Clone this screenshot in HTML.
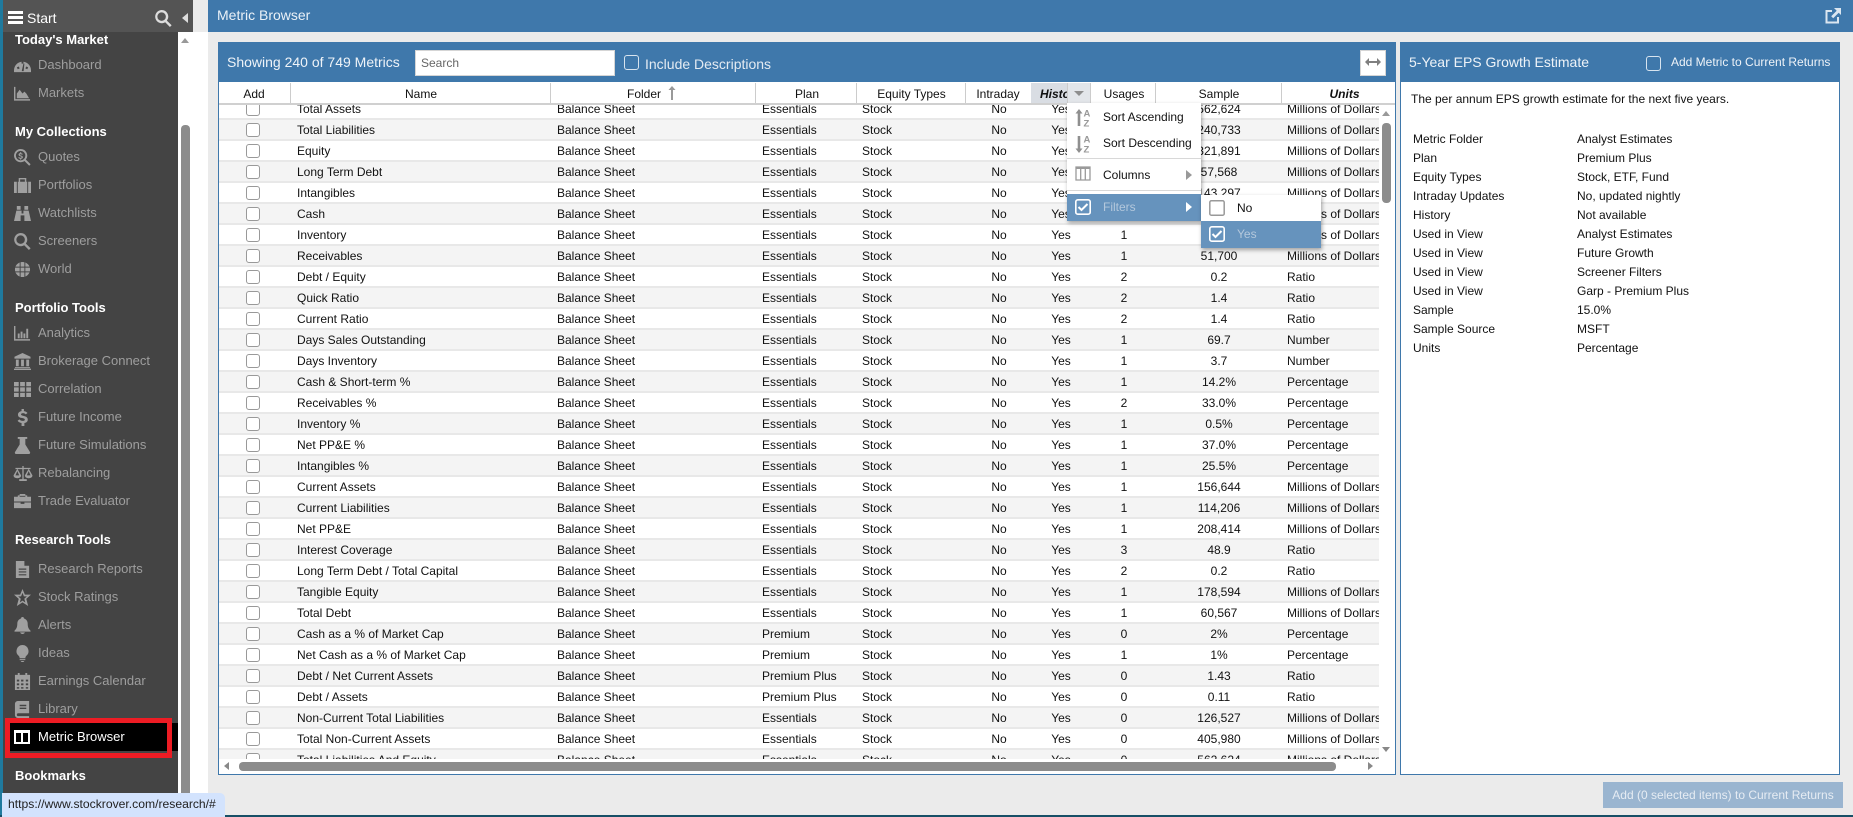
<!DOCTYPE html>
<html><head><meta charset="utf-8"><title>Metric Browser</title>
<style>
*{box-sizing:border-box}
html,body{margin:0;padding:0;width:1853px;height:817px;overflow:hidden;background:#ebebeb;font-family:"Liberation Sans",Arial,sans-serif;font-size:12px;color:#111}
.a{position:absolute}
#strip{left:0;top:0;width:3px;height:817px;background:#1f7a9e}
#side{left:3px;top:0;width:175px;height:815px;background:#444}
#sb{left:178px;top:32px;width:30px;height:783px;background:#fff}
#thumb{left:181px;top:125px;width:9px;height:690px;background:#8c8c8c;border-radius:4px 4px 0 0}
#head{left:3px;top:0;width:190px;height:32px;background:#545454}
#head span{position:absolute;left:24px;top:10px;font-size:14px;line-height:16px;color:#fff}
.t{position:absolute;left:15px;font-size:13px;font-weight:bold;color:#fff;line-height:16px;white-space:nowrap;margin-top:1px}
.it{position:absolute;left:38px;font-size:13px;color:#9e9e9e;line-height:16px;white-space:nowrap;margin-top:1px}
.ic{position:absolute;left:14px;width:17px;height:17px;fill:#a0a0a0;transform:translateY(1px)}
#top{left:208px;top:0;width:1645px;height:32px;background:#3f78ab;color:#eaf1f7;font-size:14px}
#top span{position:absolute;left:9px;top:7px;line-height:16px}
#lp{left:218px;top:42px;width:1178px;height:733px;border:1px solid #3f78ab;background:#fff;overflow:hidden}
#tb{left:218px;top:42px;width:1178px;height:40px;background:#3f78ab;color:#eef3f8;font-size:14px}
#srch{left:415px;top:50px;width:200px;height:26px;background:#fff;border:1px solid #d5d5d5;color:#666;padding:5px 5px;line-height:14px}
.cbw{width:15px;height:15px;border:1.5px solid #d7e4ef;border-radius:3px;background:#3f78ab}
#hd{left:219px;top:83px;width:1176px;height:22px;background:#fff;border-bottom:2px solid #d0d0d0}
.h{position:absolute;top:86px;height:17px;line-height:17px;text-align:center;color:#111;white-space:nowrap;overflow:hidden}
.sep{position:absolute;top:83px;width:1px;height:20px;background:#ccc}
#rows{left:219px;top:105px;width:1160px;height:654px;overflow:hidden}
#rin{position:absolute;left:0;top:-6px;width:1160px}
.r{position:relative;height:21px;border-bottom:2px solid #e8e8e8;background:#fff;line-height:19px}
.r:nth-child(even){background:#f4f4f4}
.r i{position:absolute;left:27px;top:3px;width:14px;height:14px;border:1.5px solid #999;border-radius:3px;background:#fff}
.r span{position:absolute;top:1px;white-space:nowrap}
.r span:nth-of-type(1){left:78px}
.r span:nth-of-type(2){left:338px}
.r span:nth-of-type(3){left:543px}
.r span:nth-of-type(4){left:643px}
.r span:nth-of-type(5){left:747px;width:66px;text-align:center}
.r span:nth-of-type(6){left:812px;width:60px;text-align:center}
.r span:nth-of-type(7){left:873px;width:64px;text-align:center}
.r span:nth-of-type(8){left:937px;width:126px;text-align:center}
.r span:nth-of-type(9){left:1068px;width:92px;overflow:hidden}
#menu{left:1067px;top:103px;width:134px;height:118px;background:#fff;box-shadow:1px 2px 4px rgba(0,0,0,.35)}
#sub{left:1201px;top:195px;width:120px;height:53px;background:#fff;box-shadow:1px 2px 4px rgba(0,0,0,.35)}
.mt{position:absolute;line-height:16px;white-space:nowrap;color:#111}
#rp{left:1400px;top:42px;width:440px;height:733px;border:1px solid #3f78ab;background:#fff}
#rh{left:1400px;top:42px;width:440px;height:40px;background:#3f78ab;color:#eef3f8}
.k,.v{position:absolute;line-height:16px;white-space:nowrap;color:#111}
.k{left:1413px}.v{left:1577px}
#btn{left:1603px;top:782px;width:240px;height:26px;background:#9ab5d0;color:#e6ecf3;text-align:center;line-height:26px;font-size:12px}
#bot{left:0;top:815px;width:1853px;height:2px;background:#174f66}
#tip{left:2px;top:793px;width:223px;height:24px;background:#d3e3fd;border-radius:0 5px 0 0;font-size:12.15px;color:#222;line-height:22px;padding-left:6px;white-space:nowrap;overflow:hidden}
</style></head><body>
<div class="a" id="strip"></div>
<div class="a" id="side">
<div class="t" style="top:31px;left:12px">Today's Market</div>
<div class="it" style="top:56px;left:35px">Dashboard</div>
<div class="it" style="top:84px;left:35px">Markets</div>
<div class="t" style="top:123px;left:12px">My Collections</div>
<div class="it" style="top:148px;left:35px">Quotes</div>
<div class="it" style="top:176px;left:35px">Portfolios</div>
<div class="it" style="top:204px;left:35px">Watchlists</div>
<div class="it" style="top:232px;left:35px">Screeners</div>
<div class="it" style="top:260px;left:35px">World</div>
<div class="t" style="top:299px;left:12px">Portfolio Tools</div>
<div class="it" style="top:324px;left:35px">Analytics</div>
<div class="it" style="top:352px;left:35px">Brokerage Connect</div>
<div class="it" style="top:380px;left:35px">Correlation</div>
<div class="it" style="top:408px;left:35px">Future Income</div>
<div class="it" style="top:436px;left:35px">Future Simulations</div>
<div class="it" style="top:464px;left:35px">Rebalancing</div>
<div class="it" style="top:492px;left:35px">Trade Evaluator</div>
<div class="t" style="top:531px;left:12px">Research Tools</div>
<div class="it" style="top:560px;left:35px">Research Reports</div>
<div class="it" style="top:588px;left:35px">Stock Ratings</div>
<div class="it" style="top:616px;left:35px">Alerts</div>
<div class="it" style="top:644px;left:35px">Ideas</div>
<div class="it" style="top:672px;left:35px">Earnings Calendar</div>
<div class="it" style="top:700px;left:35px">Library</div>
<div class="a" style="left:7px;top:723px;width:168px;height:28px;background:#000"></div>
<div class="a" style="left:2px;top:718px;width:167px;height:40px;border:5px solid #ed1c24"></div>
<div class="it" style="top:728px;left:35px;color:#fff">Metric Browser</div>
<div class="t" style="top:767px;left:12px">Bookmarks</div>
</div>
<!-- sidebar icons -->
<svg class="a ic" style="top:56px" viewBox="0 0 18 18"><path fill-rule="evenodd" d="M0 14a9 9 0 1 1 18 0v2H0zM3 11l1 2 2-1-1-2zM8 5v2h2V5zM13 10l-1 2 2 1 1-2zM8.200 15h2L11 7 10 7z"/></svg>
<svg class="a ic" style="top:84px" viewBox="0 0 18 18"><path d="M0 2h1.500v13H17v1.500H0z"/><path d="M3 14V9l3-4 3 4 2-2 2 2 3 5z"/></svg>
<svg class="a ic" style="top:148px" viewBox="0 0 18 18"><path fill-rule="evenodd" d="M7 0a7 7 0 0 1 5.600 11.200l5 5-1.500 1.500-5-5A7 7 0 1 1 7 0zm0 2a5 5 0 1 0 0 10A5 5 0 0 0 7 2z"/><path d="M6.400 3.500h1.200v1c1 .1 1.500.5 1.800 1l-1 .6c-.3-.4-.7-.6-1.200-.6s-1 .2-1 .6 .4.500 1.200.8c1.200.3 2 .7 2 1.800 0 .9-.7 1.500-1.800 1.600v1H6.400v-1c-1-.1-1.700-.6-2-1.200l1-.6c.3.500.9.800 1.500.8.700 0 1.100-.2 1.100-.7 0-.4-.4-.6-1.300-.8-1.100-.3-1.900-.7-1.900-1.800 0-.9.700-1.500 1.600-1.600z"/></svg>
<svg class="a ic" style="top:176px" viewBox="0 0 18 18"><path fill-rule="evenodd" d="M0 5h3v12H0zM15 5h3v12h-3zM4 5h1V1h8v4h1v12H4zM6.500 2.500V5h5V2.500z"/></svg>
<svg class="a ic" style="top:204px" viewBox="0 0 18 18"><path d="M3 1h4v4H3zM11 1h4v4h-4zM2.500 6H8v3h2V6h5.500L18 17h-7v-6H7v6H0z"/></svg>
<svg class="a ic" style="top:232px" viewBox="0 0 18 18"><path fill-rule="evenodd" d="M7 0a7 7 0 0 1 5.600 11.200l5 5-1.800 1.800-5-5A7 7 0 1 1 7 0zm0 2.500a4.500 4.500 0 1 0 0 9 4.500 4.500 0 0 0 0-9z"/></svg>
<svg class="a ic" style="top:260px" viewBox="0 0 18 18"><path d="M9 1a8 8 0 1 0 0 16A8 8 0 0 0 9 1z"/><path fill="#444" d="M1 6h16v1H1zM1 11h16v1H1zM6 1h1v16H6zM11 1h1v16h-1z"/></svg>
<svg class="a ic" style="top:324px" viewBox="0 0 18 18"><path d="M0 1h1.500v14H17v1.500H0zM4 9h2v5H4zM7 7h2v7H7zM10 9h2v5h-2zM13 4h2v10h-2z"/></svg>
<svg class="a ic" style="top:352px" viewBox="0 0 18 18"><path d="M9 0l8.500 4v2H.5V4zM2 7h3v7H2zM7.500 7h3v7h-3zM13 7h3v7h-3zM1 15h16v1H1zM0 16.500h18V18H0z"/></svg>
<svg class="a ic" style="top:380px" viewBox="0 0 18 18"><path d="M0 1h5v4.500H0zM6.500 1h5v4.500h-5zM13 1h5v4.500h-5zM0 6.800h5v4.500H0zM6.500 6.800h5v4.500h-5zM13 6.800h5v4.500h-5zM0 12.600h5V17H0zM6.500 12.600h5V17h-5zM13 12.600h5V17h-5z"/></svg>
<svg class="a ic" style="top:408px" viewBox="0 0 18 18"><path d="M8 0h2.500v2.200c1.600.2 3 1 3.800 2.100l-1.900 1.400c-.6-.8-1.600-1.300-2.800-1.300-1.300 0-2.200.5-2.200 1.300 0 .9 1 1.200 2.700 1.600 2.300.5 4.500 1.400 4.500 3.900 0 2-1.500 3.300-3.600 3.600V18H8v-3.200c-1.800-.2-3.300-1.100-4.200-2.400l2-1.400c.7 1 1.900 1.600 3.300 1.600 1.400 0 2.400-.5 2.400-1.400 0-1-1.100-1.300-2.900-1.700C6.300 9.400 4.200 8.600 4.200 6c0-1.900 1.500-3.300 3.800-3.700z"/></svg>
<svg class="a ic" style="top:436px" viewBox="0 0 18 18"><path d="M4 0h10v2h-2v6l5 8c.4 1-.2 2-1.200 2H2.200C1.200 18 .6 17 1 16l5-8V2H4z"/></svg>
<svg class="a ic" style="top:464px;left:13px;width:20px" viewBox="0 0 20 18"><path d="M9.300 1h1.400v14H14v2H6v-2h3.300zM2 3h16v1.400H2z"/><path d="M4 4L0 11c0 2 1.800 3 4 3s4-1 4-3zM4 6.500L6 11H2zM16 4l-4 7c0 2 1.800 3 4 3s4-1 4-3zM16 6.500l2 4.500h-4z" fill-rule="evenodd"/></svg>
<svg class="a ic" style="top:492px" viewBox="0 0 18 18"><path d="M6 1h6v1.500h2V4h4v5H0V4h4V2.500h2zM6 3v1h6V3zM0 10h7v1.500h4V10h7v6H0z"/></svg>
<svg class="a ic" style="top:560px" viewBox="0 0 18 18"><path fill-rule="evenodd" d="M2 0h9l5 5v13H2zM11 0v5h5zM5 8v1.200h8V8zM5 11v1.200h8V11zM5 14v1.200h8V14z"/></svg>
<svg class="a ic" style="top:588px" viewBox="0 0 18 18"><path fill-rule="evenodd" d="M9 0l2.500 6H18l-5 4.500L15 18l-6-3.800L3 18l2-7.500L0 6h6.500zM9 4L7.500 7.800H4.400l2.800 2.500-1 4 2.800-2 3 2-1.100-4 2.800-2.500h-3.200z"/></svg>
<svg class="a ic" style="top:616px" viewBox="0 0 18 18"><path d="M9 0a1.500 1.500 0 0 1 1.500 1.600C13 2.300 14.500 4.500 14.500 7c0 4 1 5.500 3 7.500v1H.5v-1c2-2 3-3.500 3-7.500 0-2.500 1.500-4.700 4-5.400A1.500 1.500 0 0 1 9 0zM6.500 16.300h5C11.300 17.300 10.300 18 9 18s-2.300-.7-2.500-1.700z"/></svg>
<svg class="a ic" style="top:644px" viewBox="0 0 18 18"><path d="M9 0a6.500 6.500 0 0 1 4 11.500c-.7.700-1 1.500-1 2.500H6c0-1-.3-1.800-1-2.500A6.500 6.500 0 0 1 9 0zM6 15h6v1H6zM7 17h4l-1 1H8z"/></svg>
<svg class="a ic" style="top:672px" viewBox="0 0 18 18"><path fill-rule="evenodd" d="M4 0h2v2h6V0h2v2h3v16H1V2h3zM3 7v2h2.500V7zM7.500 7v2H10V7zM12.500 7v2H15V7zM3 11v2h2.500v-2zM7.500 11v2H10v-2zM12.500 11v2H15v-2zM3 15v1.500h2.500V15zM7.500 15v1.500H10V15zM12.500 15v1.500H15V15z"/></svg>
<svg class="a ic" style="top:700px" viewBox="0 0 18 18"><path fill-rule="evenodd" d="M4 0h12v13H4.500a1.500 1.500 0 0 0 0 3H16v2H4a3 3 0 0 1-3-3V3a3 3 0 0 1 3-3zM6 4v1.500h7V4zM6 7v1.500h7V7z"/></svg>
<svg class="a" style="left:14px;top:730px;width:16px;height:14px" viewBox="0 0 16 14"><path fill="#fff" fill-rule="evenodd" d="M0 0h16v14H0zM2 3v9h5V3zM9 3v9h5V3z"/></svg>
<div class="a" id="sb"></div><div class="a" id="thumb"></div>
<div class="a" style="left:181px;top:38px;width:0;height:0;border-left:4.500px solid transparent;border-right:4.500px solid transparent;border-bottom:5px solid #999"></div>
<div class="a" id="head"><span>Start</span>
<div class="a" style="left:5px;top:11px;width:15px;height:3px;background:#fff"></div>
<div class="a" style="left:5px;top:16px;width:15px;height:3px;background:#fff"></div>
<div class="a" style="left:5px;top:21px;width:15px;height:3px;background:#fff"></div>
<svg class="a" style="left:152px;top:10px;width:17px;height:17px" viewBox="0 0 18 18"><path fill="#ddd" fill-rule="evenodd" d="M7 0a7 7 0 0 1 5.600 11.200l5 5-1.800 1.800-5-5A7 7 0 1 1 7 0zm0 2.500a4.500 4.500 0 1 0 0 9 4.500 4.500 0 0 0 0-9z"/></svg>
<div class="a" style="left:179px;top:13px;width:0;height:0;border-top:5px solid transparent;border-bottom:5px solid transparent;border-right:6px solid #ddd"></div>
</div>
<div class="a" id="top"><span>Metric Browser</span>
<svg class="a" style="left:1617px;top:8px;width:16px;height:16px" viewBox="0 0 16 16"><path fill="none" stroke="#dbe6f0" stroke-width="2" d="M7 3H1.500v11.500H13V9"/><path fill="#dbe6f0" d="M9 0h7v7l-2.300-2.300-5.500 5.500-2-2 5.500-5.500z"/></svg>
</div>
<div class="a" id="lp"></div>
<div class="a" id="tb"></div>
<div class="a" style="left:227px;top:54px;color:#eef3f8;font-size:14px;line-height:16px">Showing 240 of 749 Metrics</div>
<div class="a" id="srch">Search</div>
<div class="a cbw" style="left:624px;top:55px"></div>
<div class="a" style="left:645px;top:56px;color:#e4ebf2;font-size:14px;line-height:16px">Include Descriptions</div>
<div class="a" style="left:1360px;top:50px;width:26px;height:26px;background:#fff;border:1px solid #d5d5d5"></div>
<svg class="a" style="left:1365px;top:57px;width:16px;height:10px" viewBox="0 0 16 10"><path fill="#7f7f7f" d="M0 5l4-4v3h8V1l4 4-4 4V6H4v3z"/></svg>
<div class="a" id="hd"></div>
<div class="sep" style="left:290px"></div><div class="sep" style="left:550px"></div><div class="sep" style="left:755px"></div><div class="sep" style="left:856px"></div><div class="sep" style="left:965px"></div><div class="sep" style="left:1031px"></div><div class="sep" style="left:1155px"></div><div class="sep" style="left:1281px"></div>
<div class="h" style="left:218px;width:72px">Add</div>
<div class="h" style="left:291px;width:260px">Name</div>
<div class="a" style="left:627px;top:86px;line-height:17px">Folder</div>
<svg class="a" style="left:668px;top:86px;width:8px;height:14px" viewBox="0 0 8 14"><path fill="#999" d="M4 0l3.500 4H5v10H3V4H.5z"/></svg>
<div class="h" style="left:757px;width:100px">Plan</div>
<div class="h" style="left:857px;width:109px">Equity Types</div>
<div class="h" style="left:965px;width:66px">Intraday</div>
<div class="h" style="left:1092px;width:64px">Usages</div>
<div class="h" style="left:1156px;width:126px">Sample</div>
<div class="a" style="left:1282px;top:86px;line-height:17px;width:114px;font-weight:bold;font-style:italic;text-align:center;padding-left:11px">Units</div>
<div class="a" style="left:1031px;top:83px;width:60px;height:20px;background:#d9dde3"></div>
<div class="a" style="left:1040px;top:86px;width:27px;overflow:hidden;line-height:17px;font-weight:bold;font-style:italic;white-space:nowrap">History</div>
<div class="a" style="left:1067px;top:83px;width:24px;height:20px;background:#e3e6ea;border-left:1px solid #ccc;border-right:1px solid #ccc"></div>
<div class="a" style="left:1074px;top:91px;width:0;height:0;border-left:5px solid transparent;border-right:5px solid transparent;border-top:5px solid #8e8e8e"></div>
<div class="a" id="rows"><div id="rin">
<div class="r"><i></i><span>Total Assets</span><span>Balance Sheet</span><span>Essentials</span><span>Stock</span><span>No</span><span>Yes</span><span>1</span><span>562,624</span><span>Millions of Dollars</span></div>
<div class="r"><i></i><span>Total Liabilities</span><span>Balance Sheet</span><span>Essentials</span><span>Stock</span><span>No</span><span>Yes</span><span>1</span><span>240,733</span><span>Millions of Dollars</span></div>
<div class="r"><i></i><span>Equity</span><span>Balance Sheet</span><span>Essentials</span><span>Stock</span><span>No</span><span>Yes</span><span>1</span><span>321,891</span><span>Millions of Dollars</span></div>
<div class="r"><i></i><span>Long Term Debt</span><span>Balance Sheet</span><span>Essentials</span><span>Stock</span><span>No</span><span>Yes</span><span>1</span><span>57,568</span><span>Millions of Dollars</span></div>
<div class="r"><i></i><span>Intangibles</span><span>Balance Sheet</span><span>Essentials</span><span>Stock</span><span>No</span><span>Yes</span><span>1</span><span>143,297</span><span>Millions of Dollars</span></div>
<div class="r"><i></i><span>Cash</span><span>Balance Sheet</span><span>Essentials</span><span>Stock</span><span>No</span><span>Yes</span><span>1</span><span>104,757</span><span>Millions of Dollars</span></div>
<div class="r"><i></i><span>Inventory</span><span>Balance Sheet</span><span>Essentials</span><span>Stock</span><span>No</span><span>Yes</span><span>1</span><span>2,636</span><span>Millions of Dollars</span></div>
<div class="r"><i></i><span>Receivables</span><span>Balance Sheet</span><span>Essentials</span><span>Stock</span><span>No</span><span>Yes</span><span>1</span><span>51,700</span><span>Millions of Dollars</span></div>
<div class="r"><i></i><span>Debt / Equity</span><span>Balance Sheet</span><span>Essentials</span><span>Stock</span><span>No</span><span>Yes</span><span>2</span><span>0.2</span><span>Ratio</span></div>
<div class="r"><i></i><span>Quick Ratio</span><span>Balance Sheet</span><span>Essentials</span><span>Stock</span><span>No</span><span>Yes</span><span>2</span><span>1.4</span><span>Ratio</span></div>
<div class="r"><i></i><span>Current Ratio</span><span>Balance Sheet</span><span>Essentials</span><span>Stock</span><span>No</span><span>Yes</span><span>2</span><span>1.4</span><span>Ratio</span></div>
<div class="r"><i></i><span>Days Sales Outstanding</span><span>Balance Sheet</span><span>Essentials</span><span>Stock</span><span>No</span><span>Yes</span><span>1</span><span>69.7</span><span>Number</span></div>
<div class="r"><i></i><span>Days Inventory</span><span>Balance Sheet</span><span>Essentials</span><span>Stock</span><span>No</span><span>Yes</span><span>1</span><span>3.7</span><span>Number</span></div>
<div class="r"><i></i><span>Cash &amp; Short-term %</span><span>Balance Sheet</span><span>Essentials</span><span>Stock</span><span>No</span><span>Yes</span><span>1</span><span>14.2%</span><span>Percentage</span></div>
<div class="r"><i></i><span>Receivables %</span><span>Balance Sheet</span><span>Essentials</span><span>Stock</span><span>No</span><span>Yes</span><span>2</span><span>33.0%</span><span>Percentage</span></div>
<div class="r"><i></i><span>Inventory %</span><span>Balance Sheet</span><span>Essentials</span><span>Stock</span><span>No</span><span>Yes</span><span>1</span><span>0.5%</span><span>Percentage</span></div>
<div class="r"><i></i><span>Net PP&amp;E %</span><span>Balance Sheet</span><span>Essentials</span><span>Stock</span><span>No</span><span>Yes</span><span>1</span><span>37.0%</span><span>Percentage</span></div>
<div class="r"><i></i><span>Intangibles %</span><span>Balance Sheet</span><span>Essentials</span><span>Stock</span><span>No</span><span>Yes</span><span>1</span><span>25.5%</span><span>Percentage</span></div>
<div class="r"><i></i><span>Current Assets</span><span>Balance Sheet</span><span>Essentials</span><span>Stock</span><span>No</span><span>Yes</span><span>1</span><span>156,644</span><span>Millions of Dollars</span></div>
<div class="r"><i></i><span>Current Liabilities</span><span>Balance Sheet</span><span>Essentials</span><span>Stock</span><span>No</span><span>Yes</span><span>1</span><span>114,206</span><span>Millions of Dollars</span></div>
<div class="r"><i></i><span>Net PP&amp;E</span><span>Balance Sheet</span><span>Essentials</span><span>Stock</span><span>No</span><span>Yes</span><span>1</span><span>208,414</span><span>Millions of Dollars</span></div>
<div class="r"><i></i><span>Interest Coverage</span><span>Balance Sheet</span><span>Essentials</span><span>Stock</span><span>No</span><span>Yes</span><span>3</span><span>48.9</span><span>Ratio</span></div>
<div class="r"><i></i><span>Long Term Debt / Total Capital</span><span>Balance Sheet</span><span>Essentials</span><span>Stock</span><span>No</span><span>Yes</span><span>2</span><span>0.2</span><span>Ratio</span></div>
<div class="r"><i></i><span>Tangible Equity</span><span>Balance Sheet</span><span>Essentials</span><span>Stock</span><span>No</span><span>Yes</span><span>1</span><span>178,594</span><span>Millions of Dollars</span></div>
<div class="r"><i></i><span>Total Debt</span><span>Balance Sheet</span><span>Essentials</span><span>Stock</span><span>No</span><span>Yes</span><span>1</span><span>60,567</span><span>Millions of Dollars</span></div>
<div class="r"><i></i><span>Cash as a % of Market Cap</span><span>Balance Sheet</span><span>Premium</span><span>Stock</span><span>No</span><span>Yes</span><span>0</span><span>2%</span><span>Percentage</span></div>
<div class="r"><i></i><span>Net Cash as a % of Market Cap</span><span>Balance Sheet</span><span>Premium</span><span>Stock</span><span>No</span><span>Yes</span><span>1</span><span>1%</span><span>Percentage</span></div>
<div class="r"><i></i><span>Debt / Net Current Assets</span><span>Balance Sheet</span><span>Premium Plus</span><span>Stock</span><span>No</span><span>Yes</span><span>0</span><span>1.43</span><span>Ratio</span></div>
<div class="r"><i></i><span>Debt / Assets</span><span>Balance Sheet</span><span>Premium Plus</span><span>Stock</span><span>No</span><span>Yes</span><span>0</span><span>0.11</span><span>Ratio</span></div>
<div class="r"><i></i><span>Non-Current Total Liabilities</span><span>Balance Sheet</span><span>Essentials</span><span>Stock</span><span>No</span><span>Yes</span><span>0</span><span>126,527</span><span>Millions of Dollars</span></div>
<div class="r"><i></i><span>Total Non-Current Assets</span><span>Balance Sheet</span><span>Essentials</span><span>Stock</span><span>No</span><span>Yes</span><span>0</span><span>405,980</span><span>Millions of Dollars</span></div>
<div class="r"><i></i><span>Total Liabilities And Equity</span><span>Balance Sheet</span><span>Essentials</span><span>Stock</span><span>No</span><span>Yes</span><span>0</span><span>562,624</span><span>Millions of Dollars</span></div>
</div></div>
<!-- scrollbars -->
<div class="a" style="left:1382px;top:123px;width:9px;height:80px;background:#8c8c8c;border-radius:4px"></div>
<div class="a" style="left:1382px;top:111px;width:0;height:0;border-left:4.500px solid transparent;border-right:4.500px solid transparent;border-bottom:5px solid #999"></div>
<div class="a" style="left:1382px;top:747px;width:0;height:0;border-left:4.500px solid transparent;border-right:4.500px solid transparent;border-top:5px solid #888"></div>
<div class="a" style="left:239px;top:762px;width:1097px;height:9px;background:#8c8c8c;border-radius:4px"></div>
<div class="a" style="left:224px;top:762px;width:0;height:0;border-top:4.500px solid transparent;border-bottom:4.500px solid transparent;border-right:5px solid #888"></div>
<div class="a" style="left:1368px;top:762px;width:0;height:0;border-top:4.500px solid transparent;border-bottom:4.500px solid transparent;border-left:5px solid #888"></div>
<!-- menu -->
<div class="a" id="menu">
<div class="mt" style="left:36px;top:6px">Sort Ascending</div>
<div class="mt" style="left:36px;top:32px">Sort Descending</div>
<div class="a" style="left:0;top:55px;width:134px;height:1px;background:#d8d8d8"></div>
<div class="mt" style="left:36px;top:64px">Columns</div>
<div class="a" style="left:119px;top:67px;width:0;height:0;border-top:5px solid transparent;border-bottom:5px solid transparent;border-left:6px solid #999"></div>
<div class="a" style="left:0;top:87px;width:134px;height:1px;background:#d8d8d8"></div>
<div class="a" style="left:0;top:91px;width:134px;height:27px;background:#6693bd"></div>
<div class="mt" style="left:36px;top:96px;color:#b4c8dc">Filters</div>
<div class="a" style="left:119px;top:99px;width:0;height:0;border-top:5px solid transparent;border-bottom:5px solid transparent;border-left:6px solid #fff"></div>
<svg class="a" style="left:8px;top:5px;width:18px;height:20px" viewBox="0 0 18 20"><path fill="#8f8f8f" d="M4 1l3.500 4.500H5.300V18H2.700V5.500H.5z"/><text x="8.500" y="8.500" font-size="9.500" font-weight="bold" fill="#999" font-family="Liberation Sans">A</text><text x="8.500" y="18.500" font-size="9.500" font-weight="bold" fill="#999" font-family="Liberation Sans">Z</text></svg>
<svg class="a" style="left:8px;top:31px;width:18px;height:20px" viewBox="0 0 18 20"><path fill="#8f8f8f" d="M4 19l3.500-4.500H5.300V2H2.700v12.500H.5z"/><text x="8.500" y="8.500" font-size="9.500" font-weight="bold" fill="#999" font-family="Liberation Sans">A</text><text x="8.500" y="18.500" font-size="9.500" font-weight="bold" fill="#999" font-family="Liberation Sans">Z</text></svg>
<svg class="a" style="left:8px;top:63px;width:16px;height:15px" viewBox="0 0 16 15"><path fill="none" stroke="#9a9a9a" stroke-width="1.300" d="M1 1h14v13H1zM5.700 1v13M10.300 1v13"/><path fill="#9a9a9a" d="M1 1h14v2H1z"/></svg>
<svg class="a" style="left:8px;top:96px;width:16px;height:16px" viewBox="0 0 16 16"><rect x=".8" y=".8" width="14.400" height="14.400" rx="2" fill="#6693bd" stroke="#fff" stroke-width="1.600"/><path fill="none" stroke="#fff" stroke-width="2" d="M3.500 8l3 3 6-6"/></svg>
</div>
<div class="a" id="sub">
<svg class="a" style="left:8px;top:5px;width:16px;height:16px" viewBox="0 0 16 16"><rect x=".8" y=".8" width="14.400" height="14.400" rx="1.500" fill="#fff" stroke="#999" stroke-width="1.500"/></svg>
<div class="mt" style="left:36px;top:5px">No</div>
<div class="a" style="left:0;top:26px;width:120px;height:27px;background:#6693bd"></div>
<svg class="a" style="left:8px;top:31px;width:16px;height:16px" viewBox="0 0 16 16"><rect x=".8" y=".8" width="14.400" height="14.400" rx="2" fill="#6693bd" stroke="#fff" stroke-width="1.600"/><path fill="none" stroke="#fff" stroke-width="2" d="M3.500 8l3 3 6-6"/></svg>
<div class="mt" style="left:36px;top:31px;color:#b4c8dc">Yes</div>
</div>
<!-- right panel -->
<div class="a" id="rp"></div>
<div class="a" id="rh"></div>
<div class="a" style="left:1409px;top:54px;color:#eef3f8;font-size:14px;line-height:16px">5-Year EPS Growth Estimate</div>
<div class="a cbw" style="left:1646px;top:56px"></div>
<div class="a" style="left:1671px;top:54px;color:#eef3f8;line-height:16px">Add Metric to Current Returns</div>
<div class="k" style="left:1411px;top:91px">The per annum EPS growth estimate for the next five years.</div>
<div class="k" style="top:131px">Metric Folder</div><div class="v" style="top:131px">Analyst Estimates</div>
<div class="k" style="top:150px">Plan</div><div class="v" style="top:150px">Premium Plus</div>
<div class="k" style="top:169px">Equity Types</div><div class="v" style="top:169px">Stock, ETF, Fund</div>
<div class="k" style="top:188px">Intraday Updates</div><div class="v" style="top:188px">No, updated nightly</div>
<div class="k" style="top:207px">History</div><div class="v" style="top:207px">Not available</div>
<div class="k" style="top:226px">Used in View</div><div class="v" style="top:226px">Analyst Estimates</div>
<div class="k" style="top:245px">Used in View</div><div class="v" style="top:245px">Future Growth</div>
<div class="k" style="top:264px">Used in View</div><div class="v" style="top:264px">Screener Filters</div>
<div class="k" style="top:283px">Used in View</div><div class="v" style="top:283px">Garp - Premium Plus</div>
<div class="k" style="top:302px">Sample</div><div class="v" style="top:302px">15.0%</div>
<div class="k" style="top:321px">Sample Source</div><div class="v" style="top:321px">MSFT</div>
<div class="k" style="top:340px">Units</div><div class="v" style="top:340px">Percentage</div>
<div class="a" id="btn">Add (0 selected items) to Current Returns</div>
<div class="a" id="bot"></div>
<div class="a" id="tip">https://www.stockrover.com/research/#</div>
</body></html>
